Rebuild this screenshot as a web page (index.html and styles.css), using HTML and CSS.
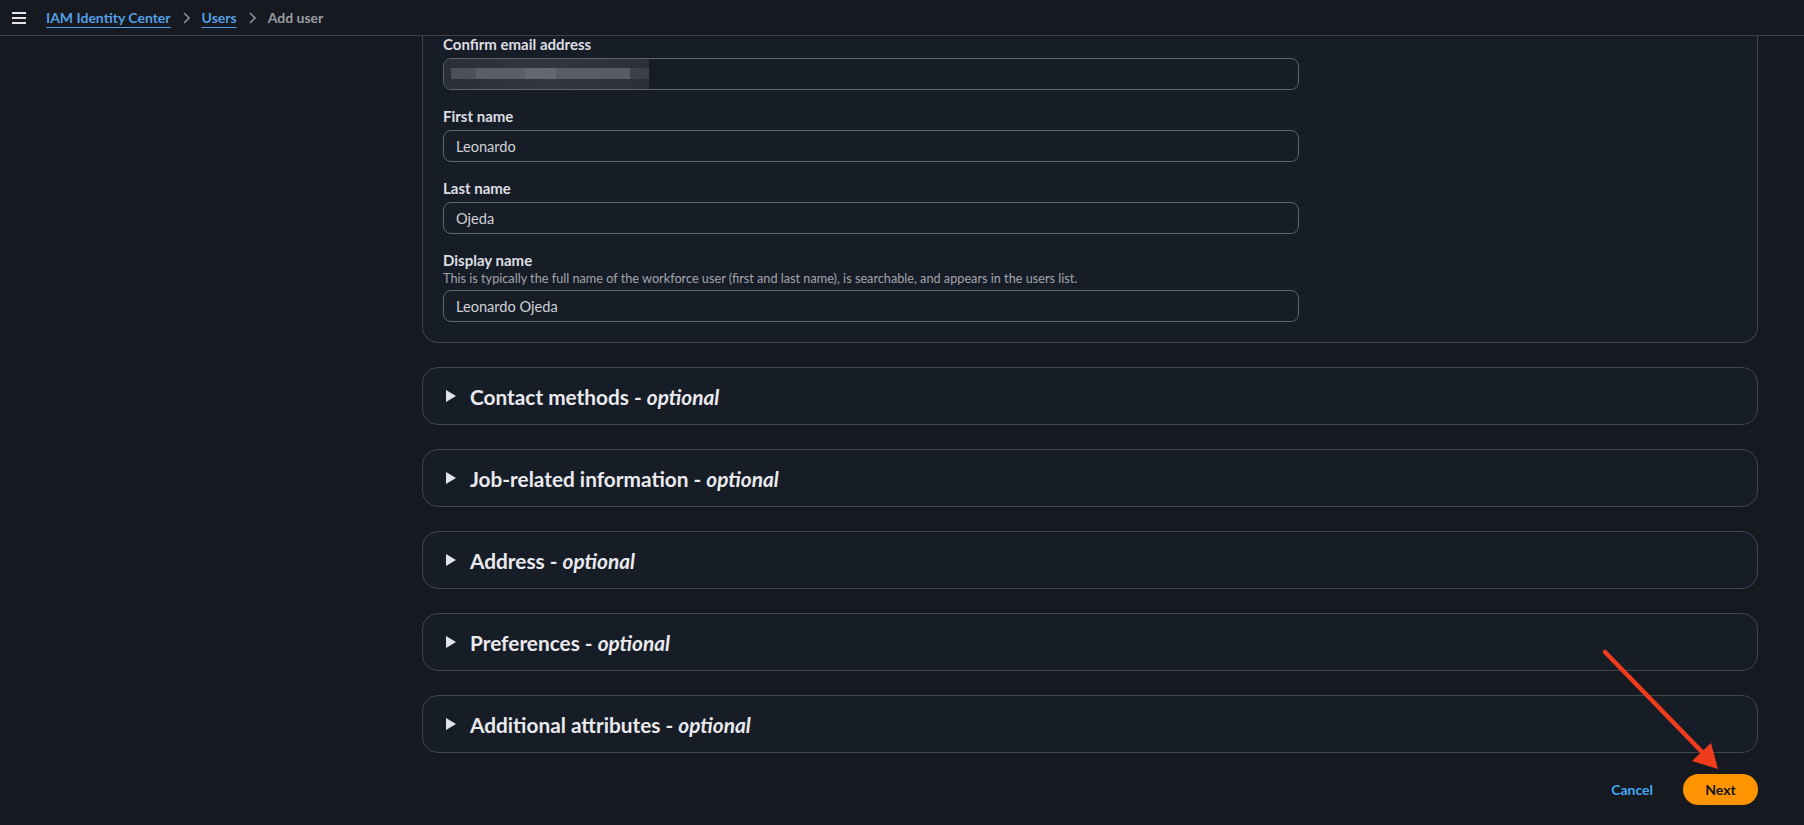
FILE: index.html
```html
<!DOCTYPE html>
<html lang="en">
<head>
    <meta charset="UTF-8">
    <meta name="viewport" content="width=device-width, initial-scale=1.0">
    <title>Add user - IAM Identity Center</title>
    <link rel="stylesheet" href="styles.css">
</head>
<body>
    <header class="topbar">
        <button class="menu-btn" aria-label="Open navigation">
            <svg width="14" height="12" viewBox="0 0 14 12">
                <rect x="0" y="0" width="14" height="2" fill="#e4e4e8"/>
                <rect x="0" y="5" width="14" height="2" fill="#e4e4e8"/>
                <rect x="0" y="10" width="14" height="2" fill="#e4e4e8"/>
            </svg>
        </button>
        <nav class="crumbs">
            <a href="#">IAM Identity Center</a>
            <svg class="chevron" width="7" height="12" viewBox="0 0 7 12"><path d="M1 1l5 5-5 5" fill="none" stroke="#8c8c94" stroke-width="1.6"/></svg>
            <a href="#">Users</a>
            <svg class="chevron" width="7" height="12" viewBox="0 0 7 12"><path d="M1 1l5 5-5 5" fill="none" stroke="#8c8c94" stroke-width="1.6"/></svg>
            <span class="current">Add user</span>
        </nav>
    </header>

    <main class="content">
        <!-- User details (scrolled) -->
        <section class="card">
            <div class="field">
                <label>Confirm email address</label>
                <div class="input"><span class="redacted"></span></div>
            </div>
            <div class="field">
                <label for="firstName">First name</label>
                <input class="input" type="text" id="firstName" value="Leonardo">
            </div>
            <div class="field">
                <label for="lastName">Last name</label>
                <input class="input" type="text" id="lastName" value="Ojeda">
            </div>
            <div class="field">
                <label for="displayName">Display name</label>
                <p class="hint">This is typically the full name of the workforce user (first and last name), is searchable, and appears in the users list.</p>
                <input class="input" type="text" id="displayName" value="Leonardo Ojeda">
            </div>
        </section>

        <div class="expander">
            <svg class="caret" width="10" height="12" viewBox="0 0 10 12"><path d="M0 0l10 6-10 6z" fill="#e4e4e8"/></svg>
            <span>Contact methods - <em>optional</em></span>
        </div>
        <div class="expander">
            <svg class="caret" width="10" height="12" viewBox="0 0 10 12"><path d="M0 0l10 6-10 6z" fill="#e4e4e8"/></svg>
            <span>Job-related information - <em>optional</em></span>
        </div>
        <div class="expander">
            <svg class="caret" width="10" height="12" viewBox="0 0 10 12"><path d="M0 0l10 6-10 6z" fill="#e4e4e8"/></svg>
            <span>Address - <em>optional</em></span>
        </div>
        <div class="expander">
            <svg class="caret" width="10" height="12" viewBox="0 0 10 12"><path d="M0 0l10 6-10 6z" fill="#e4e4e8"/></svg>
            <span>Preferences - <em>optional</em></span>
        </div>
        <div class="expander">
            <svg class="caret" width="10" height="12" viewBox="0 0 10 12"><path d="M0 0l10 6-10 6z" fill="#e4e4e8"/></svg>
            <span>Additional attributes - <em>optional</em></span>
        </div>

        <div class="actions">
            <button class="btn-link">Cancel</button>
            <button class="btn-primary">Next</button>
        </div>
    </main>

    <!-- annotation arrow pointing at Next -->
    <svg class="annotation" width="140" height="140" viewBox="1590 640 140 140">
        <line x1="1605" y1="652" x2="1703" y2="753" stroke="#f03b1c" stroke-width="4.5" stroke-linecap="round"/>
        <path d="M1718 769L1692 761L1711 743z" fill="#f03b1c"/>
    </svg>
</body>
</html>
```

FILE: styles.css
```css
body {
    margin: 0;
    background-color: #16191f;
    font-family: Lato, "Open Sans", sans-serif;
    color: #dedee3;
    overflow: hidden;
}
.topbar {
    position: relative;
    z-index: 2;
    height: 35px;
    border-bottom: 1px solid #3c4048;
    background-color: #16191f;
    display: flex;
    align-items: center;
    padding-left: 12px;
}
.menu-btn {
    background: none;
    border: none;
    padding: 0;
    width: 14px;
    height: 12px;
    margin-right: 20px;
    display: flex;
}
.crumbs {
    display: flex;
    align-items: center;
    font-size: 14px;
    font-weight: 700;
    line-height: 20px;
}
.crumbs a {
    color: #539fe5;
    text-decoration: underline;
    text-underline-offset: 4px;
    text-decoration-thickness: 1px;
}
.crumbs .chevron {
    margin: 0 12px;
}
.crumbs .current {
    color: #9a9ca3;
}
.content {
    padding: 0 46px 0 422px;
}
.card {
    margin-top: -2px;
    background-color: #161d26;
    border: 1px solid #424650;
    border-top: none;
    border-radius: 0 0 16px 16px;
    padding: 0 20px 20px;
}
.field + .field {
    margin-top: 16px;
}
.field label {
    display: block;
    font-size: 15px;
    font-weight: 700;
    line-height: 20px;
    color: #dedee3;
}
.hint {
    margin: 0;
    font-size: 12.7px;
    line-height: 16px;
    color: #a4a4ad;
}
.input {
    display: flex;
    align-items: center;
    width: 100%;
    max-width: 856px;
    height: 32px;
    margin-top: 4px;
    padding: 0 12px;
    box-sizing: border-box;
    border: 1px solid #5f6470;
    border-radius: 8px;
    background-color: #161d26;
    color: #d1d1d6;
    font-family: inherit;
    font-size: 14.6px;
    overflow: hidden;
}
.redacted {
    width: 206px;
    height: 32px;
    margin-left: -13px;
    flex-shrink: 0;
    background:
        linear-gradient(90deg, transparent 0 4%, #4c5057 4% 16%, #5a5e65 16% 40%, #63676e 40% 55%, #585c63 55% 91%, #3c4047 91%) 0 10px / 100% 11px no-repeat,
        linear-gradient(90deg, #2a2e35, #33363d 50%, #2c2f36);
}
.expander {
    margin-top: 24px;
    height: 58px;
    box-sizing: border-box;
    display: flex;
    align-items: center;
    gap: 14px;
    padding-left: 23px;
    border: 1px solid #424650;
    border-radius: 16px;
    background-color: #161d26;
    font-size: 20.8px;
    font-weight: 700;
    color: #eaeaee;
}
.expander em {
    font-style: italic;
}
.actions {
    display: flex;
    justify-content: flex-end;
    align-items: center;
    margin-top: 21px;
}
.btn-link {
    background: none;
    border: none;
    padding: 0 30px 0 0;
    color: #42a8f5;
    font-family: inherit;
    font-size: 14px;
    font-weight: 700;
    cursor: pointer;
}
.btn-primary {
    height: 31px;
    width: 75px;
    border: none;
    border-radius: 16px;
    background-color: #ff9400;
    color: #0f141a;
    font-family: inherit;
    font-size: 14px;
    font-weight: 700;
    cursor: pointer;
}
.annotation {
    position: absolute;
    left: 1590px;
    top: 640px;
    pointer-events: none;
}
```
